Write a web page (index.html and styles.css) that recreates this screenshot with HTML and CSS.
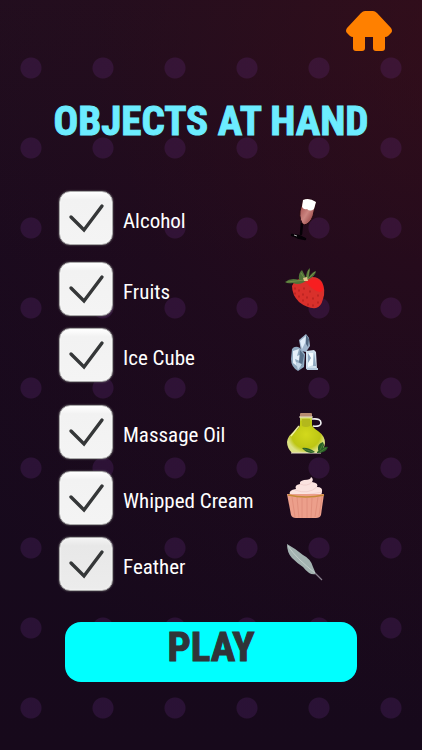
FILE: index.html
```html
<!DOCTYPE html>
<html lang="en">
<head>
<meta charset="utf-8">
<meta name="viewport" content="width=device-width, initial-scale=1">
<title>Objects at hand</title>
<link rel="stylesheet" href="styles.css">
</head>
<body>
<svg class="defs" aria-hidden="true">
  <symbol id="tick" viewBox="0 0 54 54"><path d="M12 26 25 39 43 15" fill="none" stroke="#353738" stroke-width="3.4" stroke-linecap="round"/></symbol>
</svg>
<header class="top">
  <a class="home" href="#" aria-label="Home">
    <svg viewBox="0 0 46 40"><path d="M19 0H27Q29 0 31 2L45 17Q47 20 45 22L42 25Q41 26 39 26V37Q39 40 36 40H30Q27 40 27 37V26H19V37Q19 40 16 40H10Q7 40 7 37V26Q5 26 4 25L1 22Q-1 20 1 17L15 2Q17 0 19 0Z" fill="#ff8000"/></svg>
  </a>
</header>
<main class="screen">
  <h1 class="title">OBJECTS AT HAND</h1>
  <form class="picker">
    <div class="group">
      <label class="row"><span class="box"><input type="checkbox" checked><svg class="tick"><use href="#tick"/></svg></span><span class="name">Alcohol</span>
        <svg class="pic" viewBox="0 6 70 54">
          <defs><linearGradient id="wine" x1="0" y1="0" x2="1" y2="1"><stop offset="0" stop-color="#963c3c"/><stop offset=".5" stop-color="#cb8580"/><stop offset="1" stop-color="#742022"/></linearGradient></defs>
          <path d="M32 38 31 49M22 50 35 54" stroke="#050106" stroke-width="2.5" stroke-linecap="round"/>
          <path d="M23 50Q30 48 36 54Q28 56 23 50Z" fill="#050106"/>
          <path d="M33 15Q38 12 46 17L43 31Q40 39 34 40Q29 36 30 26Z" fill="url(#wine)" stroke="#240911"/>
          <path d="M33 15Q39 12 46 17L44 24Q40 27 37 24Q34 25 32 22Z" fill="#fff"/>
          <path d="M24 50 27 51" stroke="#aaa"/>
        </svg></label>
    </div>
    <div class="group">
      <label class="row"><span class="box"><input type="checkbox" checked><svg class="tick"><use href="#tick"/></svg></span><span class="name">Fruits</span>
        <svg class="pic" viewBox="0 7 70 54">
          <path d="M22 31Q26 22 37 23Q47 20 52 27Q56 35 53 44Q51 52 46 53Q38 54 29 47Q22 40 22 31Z" fill="#d9302b"/>
          <path d="M36 27Q47 21 52 28Q55 36 50 37Q43 36 36 27Z" fill="#f71e20"/>
          <path d="M25 33v1M25 38v1M29 35v1M29 41v1M33 39v1M33 45v1M37 42v1M38 49v1M43 43v1M43 50v1M48 40v1M48 47v1M34 33v1M40 36v1" stroke="#b3211f" stroke-width="1.4" stroke-linecap="round"/>
          <path d="M37 25Q30 31 23 28Q17 29 15 27Q21 22 29 25Q28 18 32 15L36 23Q36 16 40 13L39 22Q42 17 46 16Q46 21 37 25Z" fill="#507338"/>
          <path d="M17 27 35 25M31 18 35 24M39 15 37 24M45 17 38 24" fill="none" stroke="#83984f" stroke-width=".7"/>
          <path d="M33 23 37 22 38 26 34 26Z" fill="#e1c58b"/>
        </svg></label>
      <label class="row"><span class="box"><input type="checkbox" checked><svg class="tick"><use href="#tick"/></svg></span><span class="name">Ice Cube</span>
        <svg class="pic" viewBox="0 8 70 54">
          <path d="M29 20 36 14 39 18 40 26 36 32 31 31Z" fill="#9fb5cc"/>
          <path d="M30 21 36 16 35 23 32 29Z" fill="#e1eefa"/><path d="M36 15 39 19 38 27 36 24Z" fill="#516781"/>
          <path d="M22 29Q25 25 30 28L35 34 34 47 28 51Q21 47 21 39Z" fill="#90a9bf"/>
          <path d="M23 31 29 29 27 36 32 34 30 41 25 39 27 46 23 43Z" fill="#e5f0f9"/><path d="M30 30 34 35 32 46 29 42Z" fill="#587089"/><path d="M26 42 32 44 28 50Z" fill="#c6daea"/>
          <path d="M36 31 44 30 46 32 47 49 36 49Z" fill="#d0e0ed"/>
          <path d="M38 33H43V45L38 47Z" fill="#f5fbff"/><path d="M44 32 46 46H43ZM38 33 41 38 38 43Z" fill="#8da7bf"/><path d="M36 48H48V50H37Z" fill="#b5c9dc"/>
        </svg></label>
    </div>
    <div class="group">
      <label class="row"><span class="box"><input type="checkbox" checked><svg class="tick"><use href="#tick"/></svg></span><span class="name">Massage Oil</span>
        <svg class="pic" viewBox="0 5 70 54">
          <defs><radialGradient id="oil"><stop offset="0" stop-color="#d3d91c"/><stop offset=".75" stop-color="#bdc614"/><stop offset="1" stop-color="#dbe183"/></radialGradient></defs>
          <path d="M42 19Q51 18 51 23Q51 27 43 26" fill="none" stroke="#f0f1f2" stroke-width="1.6"/>
          <path d="M30 16H42V25Q43 28 48 31Q55 36 55 43Q54 50 50 53H22Q17 48 17 42Q18 35 25 31Q30 28 30 24Z" fill="url(#oil)"/>
          <path d="M32 19H40V26Q36 28 32 26Z" fill="#b3b81c"/><path d="M29 26Q24 32 21 36" fill="none" stroke="#edf0a2" stroke-width="1.5"/>
          <rect x="30" y="13" width="12" height="4" rx="1" fill="#b68b71"/><path d="M29 17H43M21 53H51" stroke="#e6ddc9"/>
          <path d="M32 48Q38 47 45 52Q38 55 32 48ZM48 50Q47 44 53 42Q56 47 49 52ZM47 52Q54 46 58 47Q56 53 47 53Z" fill="#286227"/>
          <path d="M34 49 43 52M50 50 53 44M50 52 56 48" stroke="#5d863d" stroke-width=".7"/>
        </svg></label>
      <label class="row"><span class="box"><input type="checkbox" checked><svg class="tick"><use href="#tick"/></svg></span><span class="name">Whipped Cream</span>
        <svg class="pic" viewBox="0 6 70 54">
          <path d="M20 30Q18 25 26 24Q24 20 30 19Q29 16 34 15Q41 15 41 12Q44 14 42 17Q49 18 47 22Q53 22 52 27L51 31Z" fill="#fbe3e0"/>
          <path d="M25 25Q38 30 47 22M30 19Q37 22 42 17M20 30Q33 31 52 27" fill="none" stroke="#efcdca" stroke-width=".8"/>
          <path d="M17 29H54L51 50Q50 53 46 53H26Q22 53 21 50Z" fill="#ec9f8b"/>
          <path d="M22 32 25 52M27 32 29 53M32 33V53M37 33V53M42 33 41 53M48 32 45 52M52 31 49 51" stroke="#de8c79" stroke-width=".8"/>
          <path d="M18 30Q36 34 54 30" fill="none" stroke="#c58a37" stroke-width="1.5"/>
        </svg></label>
      <label class="row"><span class="box dim"><input type="checkbox" checked><svg class="tick"><use href="#tick"/></svg></span><span class="name">Feather</span>
        <svg class="pic" viewBox="0 7 70 54">
          <path d="M17 14Q26 19 33 25Q41 29 43 37L46 44Q40 46 33 37Q28 34 22 28Q17 23 17 14Z" fill="#a3b3b1"/>
          <path d="M18 16Q26 28 45 43" fill="none" stroke="#c1cecb"/><path d="M45 43 52 50" stroke="#89808e" stroke-width="1.2"/>
        </svg></label>
    </div>
    <button class="play" type="button">PLAY</button>
  </form>
</main>
</body>
</html>
```
FILE: styles.css
```css
* { box-sizing: border-box; }

body {
  margin: 0;
  min-height: 100vh;
  font-family: "Roboto Condensed", "Liberation Sans Narrow", "Liberation Sans", sans-serif;
  color: #fff;
  background:
    radial-gradient(circle, rgba(105, 45, 135, .24) 10px, transparent 11px) -5px 28px / 72px 80px,
    radial-gradient(circle at 115% 5%, rgba(72, 14, 22, .5), rgba(60, 12, 25, .2) 45%, transparent 80%),
    linear-gradient(#1e0e1f, #170a1e 35%, #17091b);
}

.defs { position: absolute; width: 0; height: 0; }

.top {
  display: flex;
  justify-content: flex-end;
  padding: 11px 30px 0;
}

.home, .home svg { display: block; width: 46px; height: 40px; }

.screen { padding: 40px 45px 64px; }

.title {
  margin: 0 0 40px;
  font-size: 41px;
  line-height: 60px;
  text-align: center;
  white-space: nowrap;
  color: #6cecff;
  -webkit-text-stroke: 1px currentColor;
}

.picker { display: flex; flex-direction: column; }

.group { display: grid; gap: 12px; padding-left: 14px; margin-bottom: 17px; }
.group + .group { margin-bottom: 23px; }
.group:nth-of-type(3) { margin-bottom: 31px; }

.row {
  display: grid;
  grid-template-columns: 54px minmax(0, 1fr) 70px;
  align-items: center;
  column-gap: 10px;
  padding-right: 37px;
  height: 54px;
}

.box { display: grid; }
.box > * { grid-area: 1 / 1; width: 54px; height: 54px; margin: 0; }

.box input {
  appearance: none;
  border: 1px solid #aaa;
  border-radius: 11px;
  background: linear-gradient(#fff, #f2f2f2 15%, #f4f4f4);
  box-shadow: inset 0 0 2px #fff, 0 0 2px #777;
}

.box.dim input { background: linear-gradient(#f3f3f3, #e8e8e8 15%, #ececec); }

.tick { pointer-events: none; visibility: hidden; }
input:checked + .tick { visibility: visible; }

.name { padding-top: 6px; font-size: 21px; line-height: 30px; white-space: nowrap; }

.pic { width: 70px; height: 54px; overflow: visible; }

.play {
  height: 60px;
  margin: 0 20px;
  padding: 0 0 10px;
  border: 0;
  border-radius: 16px;
  background: #00ffff;
  color: #303438;
  font-family: inherit;
  font-size: 41px;
  font-weight: bold;
  line-height: 50px;
  -webkit-text-stroke: 1px currentColor;
}
```
